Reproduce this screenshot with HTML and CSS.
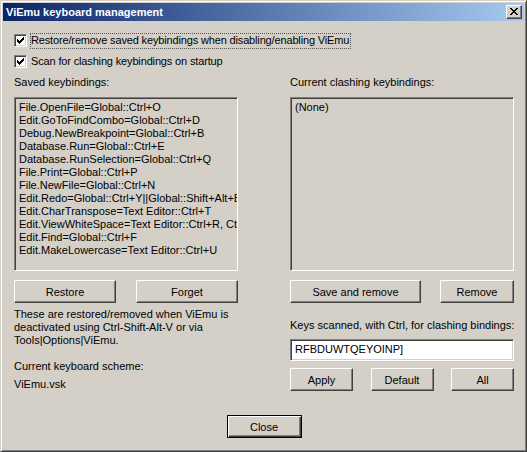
FILE: index.html
```html
<!DOCTYPE html>
<html>
<head>
<meta charset="utf-8">
<title>ViEmu keyboard management</title>
<link rel="stylesheet" href="styles.css">
</head>
<body>
<div class="window">
  <div class="titlebar">
    <span class="title">ViEmu keyboard management</span>
    <button class="title-close" aria-label="Close">
      <svg width="8" height="7" viewBox="0 0 8 7" shape-rendering="crispEdges"><path fill="#000" d="M0 0h2v1h-2z M6 0h2v1h-2z M1 1h2v1h-2z M5 1h2v1h-2z M2 2h4v1h-4z M3 3h2v1h-2z M2 4h4v1h-4z M1 5h2v1h-2z M5 5h2v1h-2z M0 6h2v1h-2z M6 6h2v1h-2z"/></svg>
    </button>
  </div>
  <div class="body">
    <label class="check-row first">
      <span class="checkbox"><svg width="9" height="9" viewBox="0 0 9 9" shape-rendering="crispEdges"><path transform="translate(1 1)" fill="#000" d="M0 2H1V3H2V4H3V3H4V2H5V1H6V0H7V3H6V4H5V5H4V6H3V7H2V6H1V5H0Z"/></svg></span>
      <span class="check-label focused">Restore/remove saved keybindings when disabling/enabling ViEmu</span>
    </label>
    <label class="check-row second">
      <span class="checkbox"><svg width="9" height="9" viewBox="0 0 9 9" shape-rendering="crispEdges"><path transform="translate(1 1)" fill="#000" d="M0 2H1V3H2V4H3V3H4V2H5V1H6V0H7V3H6V4H5V5H4V6H3V7H2V6H1V5H0Z"/></svg></span>
      <span class="check-label">Scan for clashing keybindings on startup</span>
    </label>

    <div class="columns">
      <div class="column">
        <div class="label">Saved keybindings:</div>
        <div class="listbox">
          <div>File.OpenFile=Global::Ctrl+O</div>
          <div>Edit.GoToFindCombo=Global::Ctrl+D</div>
          <div>Debug.NewBreakpoint=Global::Ctrl+B</div>
          <div>Database.Run=Global::Ctrl+E</div>
          <div>Database.RunSelection=Global::Ctrl+Q</div>
          <div>File.Print=Global::Ctrl+P</div>
          <div>File.NewFile=Global::Ctrl+N</div>
          <div>Edit.Redo=Global::Ctrl+Y||Global::Shift+Alt+Bkspce</div>
          <div>Edit.CharTranspose=Text Editor::Ctrl+T</div>
          <div>Edit.ViewWhiteSpace=Text Editor::Ctrl+R, Ctrl+W</div>
          <div>Edit.Find=Global::Ctrl+F</div>
          <div>Edit.MakeLowercase=Text Editor::Ctrl+U</div>
        </div>
        <div class="button-row">
          <button class="btn w102">Restore</button>
          <button class="btn w102">Forget</button>
        </div>
        <p class="note">These are restored/removed when ViEmu is deactivated using Ctrl-Shift-Alt-V or via Tools|Options|ViEmu.</p>
        <div class="label scheme-label">Current keyboard scheme:</div>
        <div class="label scheme">ViEmu.vsk</div>
      </div>
      <div class="column">
        <div class="label">Current clashing keybindings:</div>
        <div class="listbox">
          <div>(None)</div>
        </div>
        <div class="button-row">
          <button class="btn w131">Save and remove</button>
          <button class="btn w74">Remove</button>
        </div>
        <div class="label keys-label">Keys scanned, with Ctrl, for clashing bindings:</div>
        <div class="textbox">RFBDUWTQEYOINP]</div>
        <div class="button-row small">
          <button class="btn w63">Apply</button>
          <button class="btn w63">Default</button>
          <button class="btn w63">All</button>
        </div>
      </div>
    </div>

    <div class="footer">
      <button class="btn default w75">Close</button>
    </div>
  </div>
</div>
</body>
</html>
```

FILE: styles.css
```css
html, body {
  margin: 0;
  padding: 0;
  background: #d4d0c8;
}

body {
  font-family: "Liberation Sans", Arial, sans-serif;
  font-size: 11px;
  line-height: 13px;
  color: #000;
}

.window {
  box-sizing: border-box;
  width: 527px;
  height: 452px;
  background: #d4d0c8;
  border: 1px solid;
  border-color: #d4d0c8 #404040 #404040 #d4d0c8;
  box-shadow: inset 1px 1px #fff, inset -1px -1px #808080;
  padding: 2px;
  display: flex;
  flex-direction: column;
}

.titlebar {
  height: 18px;
  background: linear-gradient(to right, #0a246a, #a6caf0);
  display: flex;
  align-items: flex-start;
  justify-content: space-between;
  padding-left: 3px;
}

.title {
  color: #fff;
  font-weight: bold;
  font-size: 11px;
  line-height: 18px;
}

.title-close {
  box-sizing: border-box;
  width: 16px;
  height: 14px;
  margin: 2px 2px 0 0;
  padding: 0;
  background: #d4d0c8;
  border: 1px solid;
  border-color: #fff #404040 #404040 #fff;
  box-shadow: inset -1px -1px #808080;
  display: flex;
  align-items: center;
  justify-content: center;
}

.title-close svg {
  display: block;
  margin: 0 0 1px 0;
}

.body {
  display: flex;
  flex-direction: column;
  padding: 0 10px 0 11px;
}

.check-row {
  display: flex;
  align-items: center;
  height: 15px;
}

.check-row.first {
  margin-top: 12px;
}

.check-row.second {
  margin-top: 6px;
}

.checkbox {
  box-sizing: border-box;
  width: 13px;
  height: 13px;
  background: #fff;
  border: 1px solid;
  border-color: #808080 #fff #fff #808080;
  box-shadow: inset 1px 1px #404040, inset -1px -1px #d4d0c8;
  display: flex;
  align-items: center;
  justify-content: center;
  flex: none;
}

.checkbox svg {
  display: block;
}

.check-label {
  margin-left: 3px;
  padding: 0 1px 1px 0;
  line-height: 13px;
  letter-spacing: -0.15px;
  border: 1px dotted transparent;
}

.check-label.focused {
  border-color: #555;
}

.columns {
  display: flex;
  gap: 52px;
  margin-top: 7px;
}

.column {
  width: 224px;
  display: flex;
  flex-direction: column;
}

.label {
  white-space: nowrap;
}

.listbox {
  box-sizing: border-box;
  height: 174px;
  margin-top: 8px;
  border: 1px solid;
  border-color: #808080 #fff #fff #808080;
  box-shadow: inset 1px 1px #404040, inset -1px -1px #d4d0c8;
  padding: 3px 3px 0 4px;
  overflow: hidden;
  white-space: nowrap;
}

.button-row {
  display: flex;
  justify-content: space-between;
  margin-top: 9px;
}

.btn {
  box-sizing: border-box;
  height: 23px;
  padding: 0;
  background: #d4d0c8;
  font-family: inherit;
  font-size: 11px;
  color: #000;
  border: 1px solid;
  border-color: #fff #404040 #404040 #fff;
  box-shadow: inset -1px -1px #808080;
}

.btn.default {
  border: 1px solid #000;
  box-shadow: inset 1px 1px #fff, inset -1px -1px #404040, inset -2px -2px #808080;
}

.w102 { width: 102px; }
.w131 { width: 131px; }
.w74 { width: 74px; }
.w63 { width: 63px; }
.w75 { width: 75px; }

.note {
  margin: 5px 0 0 0;
}

.scheme-label {
  margin-top: 13px;
}

.scheme {
  margin-top: 5px;
}

.keys-label {
  margin-top: 16px;
}

.textbox {
  box-sizing: border-box;
  height: 22px;
  margin-top: 7px;
  background: #fff;
  border: 1px solid;
  border-color: #808080 #fff #fff #808080;
  box-shadow: inset 1px 1px #404040, inset -1px -1px #d4d0c8;
  padding: 3px 4px;
  white-space: nowrap;
}

.button-row.small {
  margin-top: 7px;
}

.footer {
  display: flex;
  justify-content: center;
  margin-top: 24px;
}
```
